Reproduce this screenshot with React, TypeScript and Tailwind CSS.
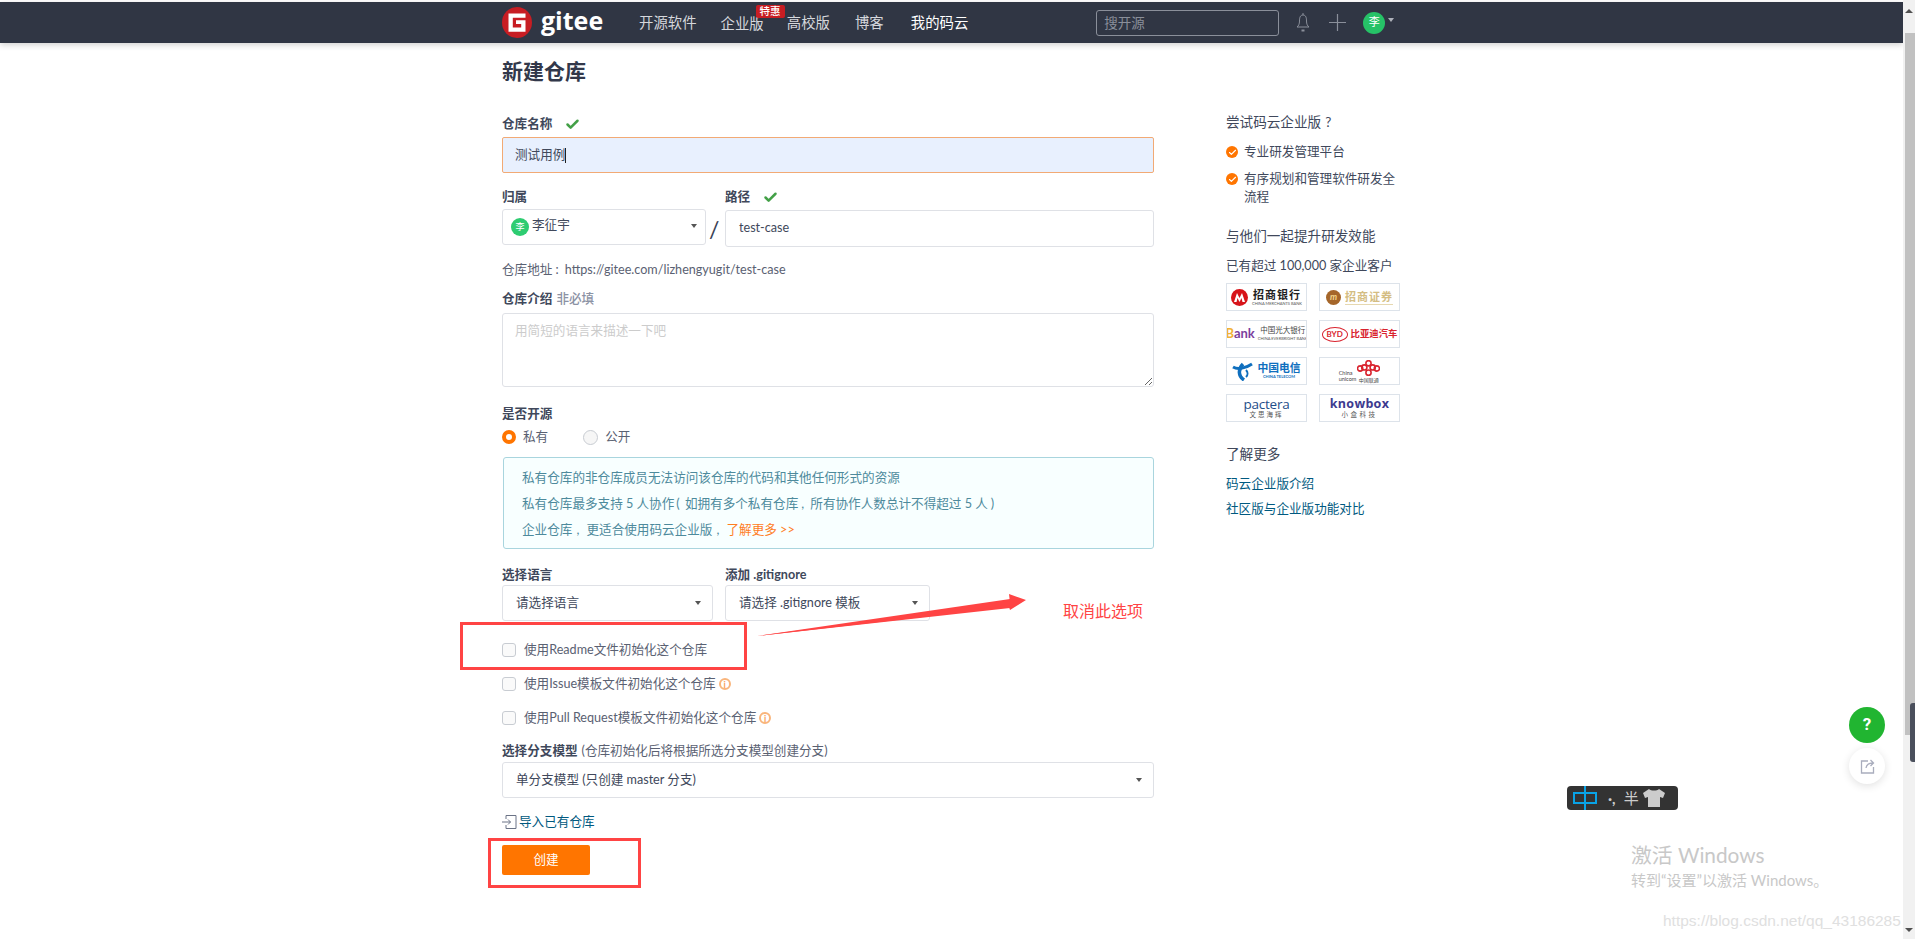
import React from "react";
import { Check } from "lucide-react";

const font = "font-['Lato','Noto_Sans_CJK_SC',sans-serif]";

const Caret: React.FC<{ className?: string }> = ({ className = "" }) => (
  <span className={`w-0 h-0 border-x-[3.5px] border-x-transparent border-t-[4px] border-t-[#555] ${className}`} />
);

const Label: React.FC<{ children: React.ReactNode; className?: string }> = ({ children, className = "" }) => (
  <div className={`h-[18px] leading-[18px] text-[12.6px] font-bold text-[#40485b] whitespace-nowrap flex items-center ${className}`}>
    {children}
  </div>
);

const OkMark: React.FC = () => <Check size={15} strokeWidth={4} className="ml-[13px] text-[#43a047]" />;

const SelectBox: React.FC<{ text: string; className?: string }> = ({ text, className = "" }) => (
  <div className={`h-9 border border-[#dfe1e6] rounded-[3px] bg-white flex items-center justify-between pl-[13px] pr-[11px] text-[12.6px] text-[#40485b] whitespace-nowrap ${className}`}>
    <span>{text}</span>
    <Caret />
  </div>
);

const InfoMark: React.FC = () => (
  <span className="ml-[3px] w-[12px] h-[12px] rounded-full border-2 border-[#f9b57c] text-[#f9a05a] text-[9px] font-bold leading-none flex items-center justify-center">
    i
  </span>
);

const CheckRow: React.FC<{ text: string; info?: boolean; className?: string }> = ({ text, info, className = "" }) => (
  <div className={`h-4 flex items-center text-[12.6px] text-[#5a6172] whitespace-nowrap ${className}`}>
    <span className="w-[14px] h-[14px] rounded-[3px] border border-[#c8ccd2] bg-[#fafafa] mr-[8px]" />
    {text}
    {info && <InfoMark />}
  </div>
);

const NavLink: React.FC<{ label: string; className?: string }> = ({ label, className = "" }) => (
  <a className={`text-[14.4px] text-[#d5d7dc] whitespace-nowrap ${className}`}>{label}</a>
);

const TopNav: React.FC = () => (
  <div className="mt-[2px] h-[41px] bg-[#303644] shadow-[0_2px_6px_rgba(0,0,0,0.18)] flex items-center pl-[502px] shrink-0">
    <svg width="30" height="31" viewBox="0 0 30 31">
      <ellipse cx="15" cy="15.5" rx="15" ry="15.5" fill="#c71d23" />
      <path d="M6.500 6.500h17v4.200H10.800v9.800h8.400v-3.400h-5.200v-3.800h9.500v11.400h-17z" fill="#fff" />
    </svg>
    <span className="ml-[9px] w-[60px] text-[25px] font-bold text-white leading-none font-['Open_Sans'] -mt-[4px]">gitee</span>
    <NavLink label="开源软件" className="ml-[38px]" />
    <div className="relative ml-[24px]">
      <NavLink label="企业版" />
      <span className="absolute left-[35px] -top-[6px] w-[29px] h-[13px] bg-[#c71d23] rounded-[2px] text-white text-[10.5px] leading-[13px] text-center font-medium">特惠</span>
    </div>
    <NavLink label="高校版" className="ml-[23px]" />
    <NavLink label="博客" className="ml-[25px]" />
    <NavLink label="我的码云" className="ml-[27px] text-white" />
    <input
      readOnly
      placeholder="搜开源"
      className="ml-[128px] w-[183px] h-[26px] border border-[#8a8f9a] rounded-[3px] bg-transparent px-[7px] text-[13.5px] outline-none placeholder:text-[#8a8f9a]"
    />
    <svg width="16" height="22" viewBox="0 0 16 22" className="ml-[16px]" fill="none" stroke="#8a8f9a" strokeWidth="1">
      <path d="M8 1v2M8 3c-3 0-3.500 3-3.500 6 0 3-1 5-2.500 6h12c-1.500-1-2.500-3-2.500-6 0-3-.5-6-3.500-6z" />
      <path d="M6.500 18.500h3" strokeWidth="2" />
    </svg>
    <svg width="17" height="17" viewBox="0 0 17 17" className="ml-[18px]" stroke="#8a8f9a" strokeWidth="1.2">
      <path d="M8.500 0v17M0 8.500h17" />
    </svg>
    <span className="ml-[17px] w-[22px] h-[22px] rounded-full bg-[#26c267] text-white text-[11px] flex items-center justify-center">李</span>
    <Caret className="ml-[3px] border-t-[#aeb2bb] -mt-[6px]" />
  </div>
);

const MainForm: React.FC = () => (
  <div className="w-[652px] shrink-0">
    <h1 className="mt-[14px] h-7 leading-7 text-[21px] font-bold text-[#32384a]">新建仓库</h1>

    <Label className="mt-[30px]">
      仓库名称
      <OkMark />
    </Label>
    <div className="mt-1 h-9 border border-[#f2aa75] rounded-[2px] bg-[#e8f0fe] flex items-center pl-[12px] text-[12.6px] text-[#40485b]">
      测试用例
      <span className="w-px h-[15px] bg-[#222]" />
    </div>

    <div className="mt-[15px] flex">
      <div className="w-[204px] shrink-0">
        <Label>归属</Label>
        <div className="mt-[3px] h-9 border border-[#dfe1e6] rounded-[3px] flex items-center pl-2 pr-[8px] text-[12.6px] text-[#40485b]">
          <span className="w-[18px] h-[18px] rounded-full bg-[#2ecc71] text-white text-[9px] flex items-center justify-center">李</span>
          <span className="ml-[3px] -mt-[3px] flex-1">李征宇</span>
          <Caret className="-mt-[2px]" />
        </div>
      </div>
      <div className="w-[19px] shrink-0 text-[23px] leading-none text-[#3a4256] pt-[30px] pl-[3px]">/</div>
      <div className="flex-1">
        <Label>
          路径
          <OkMark />
        </Label>
        <div className="mt-1 h-[37px] border border-[#dfe1e6] rounded-[3px] flex items-center pl-[13px] text-[12.6px] text-[#40485b]">test-case</div>
      </div>
    </div>

    <div className="mt-[14px] h-[18px] leading-[18px] text-[12.6px] text-[#5a6172]">
      仓库地址<span className="mx-[3px]">:</span> https://gitee.com/lizhengyugit/test-case
    </div>

    <Label className="mt-[11px]">
      仓库介绍<span className="ml-1 font-medium text-[#8c92a4]">非必填</span>
    </Label>
    <textarea
      readOnly
      placeholder="用简短的语言来描述一下吧"
      className="mt-[5px] block w-full h-[74px] border border-[#dfe1e6] rounded-[3px] px-3 py-[8px] text-[12.6px] leading-[18px] outline-none placeholder:text-[#ccc]"
    />

    <Label className="mt-[18px]">是否开源</Label>
    <div className="mt-[6px] h-4 flex items-center text-[12.6px] text-[#5a6172]">
      <span className="w-[14px] h-[14px] rounded-full border-[4px] border-[#ff7500] bg-white" />
      <span className="ml-[7px]">私有</span>
      <span className="ml-[35px] w-[15px] h-[15px] rounded-full border border-[#c8ccd2] bg-[#f6f6f6]" />
      <span className="ml-[7px]">公开</span>
    </div>

    <div className="mt-3 ml-px h-[92px] border border-[#a9d5de] rounded-[3px] bg-[#f8ffff] pl-[18px] pt-[11px] text-[12.6px] text-[#4d8a9c] leading-[18px]">
      <p>私有仓库的非仓库成员无法访问该仓库的代码和其他任何形式的资源</p>
      <p className="mt-[8px]">
        私有仓库最多支持 5 人协作<span className="mx-[2px]">(</span> 如拥有多个私有仓库<span className="mx-[3px]">,</span> 所有协作人数总计不得超过 5 人<span className="ml-[3px]">)</span>
      </p>
      <p className="mt-[8px]">
        企业仓库<span className="mx-[4px]">,</span> 更适合使用码云企业版<span className="mx-[4px]">,</span> <a className="text-[#ff7d1f]">了解更多 &gt;&gt;</a>
      </p>
    </div>

    <div className="mt-[17px] flex">
      <div className="w-[211px] shrink-0">
        <Label>选择语言</Label>
        <SelectBox text="请选择语言" className="mt-px" />
      </div>
      <div className="ml-3 w-[205px] shrink-0">
        <Label>添加 .gitignore</Label>
        <SelectBox text="请选择 .gitignore 模板" className="mt-px" />
      </div>
    </div>

    <CheckRow text="使用Readme文件初始化这个仓库" className="mt-[21px]" />
    <CheckRow text="使用Issue模板文件初始化这个仓库" info className="mt-[18px]" />
    <CheckRow text="使用Pull Request模板文件初始化这个仓库" info className="mt-[18px]" />

    <Label className="mt-[16px]">
      选择分支模型<span className="ml-1 font-normal text-[#5a6172]">(仓库初始化后将根据所选分支模型创建分支)</span>
    </Label>
    <SelectBox text="单分支模型 (只创建 master 分支)" className="mt-[2px]" />

    <div className="mt-[15px] h-[18px] flex items-center text-[12.6px] text-[#005980]">
      <svg width="15" height="16" viewBox="0 0 15 16" fill="none" stroke="#6b7386" strokeWidth="1" className="mr-[2px]">
        <path d="M4 5V1.500h10v13H4V11M0 8h8.500M6 5.500 8.500 8 6 10.500" />
      </svg>
      导入已有仓库
    </div>

    <button className="mt-[14px] block w-[88px] h-[30px] rounded-[2px] bg-[#ff7500] text-white text-[12.6px]">创建</button>
  </div>
);

const BulletCheck: React.FC = () => (
  <span className="mt-[3px] w-3 h-3 rounded-full bg-[#ff7500] flex items-center justify-center shrink-0">
    <Check size={9} strokeWidth={3} className="text-white" />
  </span>
);

const LogoBox: React.FC<{ children: React.ReactNode }> = ({ children }) => (
  <div className="h-7 border border-[#dde3ea] flex items-center justify-center overflow-hidden whitespace-nowrap">{children}</div>
);

const TwoLines: React.FC<{ top: string; sub: string; topClass: string; subClass?: string }> = ({ top, sub, topClass, subClass = "text-[#555]" }) => (
  <div className="flex flex-col items-center leading-none">
    <span className={topClass}>{top}</span>
    <span className={`mt-[2px] text-[4px] ${subClass}`}>{sub}</span>
  </div>
);

const CustomerLogos: React.FC = () => (
  <div className="mt-2 grid grid-cols-[81px_81px] grid-rows-[28px_28px_28px_28px] gap-x-3 gap-y-[9px]">
    <LogoBox>
      <svg width="17" height="17" viewBox="0 0 17 17" className="mr-[4px]">
        <circle cx="8.500" cy="8.500" r="8.500" fill="#d7141a" />
        <path d="M3 13 6 4l2.500 5L11 4l3 9h-2.500L10.500 9l-2 4-2-4-1 4z" fill="#fff" />
      </svg>
      <TwoLines top="招商银行" sub="CHINA MERCHANTS BANK" topClass="text-[11px] font-bold text-[#222] tracking-[1px]" />
    </LogoBox>
    <LogoBox>
      <span className="mr-[4px] w-[15px] h-[15px] rounded-full bg-[#a5662a] text-[#f3d58c] text-[9px] italic font-bold flex items-center justify-center">m</span>
      <span className="text-[11px] leading-[14px] font-bold text-[#d4bd83] tracking-[1px] border-b border-[#e6d8b0]">招商证券</span>
    </LogoBox>
    <LogoBox>
      <span className="text-[13px] font-bold text-[#7b3f9d] mr-[3px]">
        <span className="text-[#f2b233]">B</span>ank
      </span>
      <TwoLines top="中国光大银行" sub="CHINA EVERBRIGHT BANK" topClass="text-[7.500px] text-[#444]" />
    </LogoBox>
    <LogoBox>
      <span className="mr-[3px] w-[26px] h-[15px] rounded-[50%] border-[1.5px] border-[#d9232e] text-[#d9232e] text-[8px] font-bold flex items-center justify-center">BYD</span>
      <span className="text-[9.400px] font-bold text-[#d9232e]">比亚迪汽车</span>
    </LogoBox>
    <LogoBox>
      <svg width="21" height="20" viewBox="0 0 21 20" fill="none" stroke="#0f6fbe" className="mr-[4px]">
        <path d="M1 6c5 3 13 1 19-3" strokeWidth="3" />
        <path d="M11 3C6 8 6 15 12 19" strokeWidth="3.500" />
        <path d="M14 9c2 2 2 5 0 7" strokeWidth="2" />
      </svg>
      <TwoLines top="中国电信" sub="CHINA TELECOM" topClass="text-[10.800px] font-bold text-[#0f6fbe]" subClass="text-[#0f6fbe] font-bold" />
    </LogoBox>
    <LogoBox>
      <div className="flex flex-col text-[5.500px] leading-[6px] text-[#444] mr-[1px] mt-[9px]">
        <span>China</span>
        <span>unicom</span>
      </div>
      <div className="flex flex-col items-center">
        <svg width="23" height="17" viewBox="0 0 22 16" fill="none" stroke="#d9232e" strokeWidth="1.500">
          <circle cx="11" cy="3" r="2.500" />
          <circle cx="7" cy="7" r="2.500" />
          <circle cx="15" cy="7" r="2.500" />
          <circle cx="3" cy="8" r="2.500" />
          <circle cx="19" cy="8" r="2.500" />
          <circle cx="11" cy="12" r="2.500" />
        </svg>
        <span className="text-[5px] leading-[6px] text-[#444]">中国联通</span>
      </div>
    </LogoBox>
    <LogoBox>
      <div className="flex flex-col items-center leading-none">
        <span className="text-[13.500px] text-[#1f4e89] font-['Open_Sans'] tracking-[-0.2px]">pactera</span>
        <span className="mt-[1px] text-[6.500px] text-[#555] tracking-[2px]">文思海辉</span>
      </div>
    </LogoBox>
    <LogoBox>
      <div className="flex flex-col items-center leading-none">
        <span className="text-[12.500px] font-bold text-[#3c3a8f] font-['Open_Sans'] tracking-[0.3px]">knowbox</span>
        <span className="mt-[1px] text-[6.500px] text-[#555] tracking-[2.500px]">小盒科技</span>
      </div>
    </LogoBox>
  </div>
);

const SidePanel: React.FC = () => (
  <div className="ml-[72px] w-[176px] shrink-0 text-[#40485b]">
    <div className="mt-[70px] h-[18px] leading-[18px] text-[13.6px]">
      尝试码云企业版<span className="ml-[4px]">?</span>
    </div>
    <div className="mt-3 flex gap-[6px] text-[12.6px] leading-[18px]">
      <BulletCheck />
      <span>专业研发管理平台</span>
    </div>
    <div className="mt-[9px] flex gap-[6px] text-[12.6px] leading-[18px]">
      <BulletCheck />
      <span className="w-[154px]">有序规划和管理软件研发全流程</span>
    </div>
    <div className="mt-[21px] h-[18px] leading-[18px] text-[13.6px] whitespace-nowrap">与他们一起提升研发效能</div>
    <div className="mt-3 h-[18px] leading-[18px] text-[12.6px] whitespace-nowrap">已有超过 100,000 家企业客户</div>
    <CustomerLogos />
    <div className="mt-[23px] h-[18px] leading-[18px] text-[13.6px]">了解更多</div>
    <div className="mt-3 h-[18px] leading-[18px] text-[12.6px] text-[#005980]">码云企业版介绍</div>
    <div className="mt-[7px] h-[18px] leading-[18px] text-[12.6px] text-[#005980]">社区版与企业版功能对比</div>
  </div>
);

const ScrollBar: React.FC = () => (
  <div className="w-3 shrink-0 bg-[#f1f1f1] flex flex-col items-center relative">
    <span className="mt-[9px] w-0 h-0 border-x-[4px] border-x-transparent border-b-[4px] border-b-[#505050]" />
    <div className="mt-[20px] ml-[2px] w-[10px] h-[702px] bg-[#c1c1c1]" />
    <span className="mt-[193px] w-0 h-0 border-x-[4px] border-x-transparent border-t-[4px] border-t-[#505050]" />
    <div className="absolute left-[7px] top-[703px] w-[5px] h-[59px] rounded-l-[3px] bg-[#4a4f5c]" />
  </div>
);

// 截图上叠加的标注和系统浮层
const Overlays: React.FC = () => (
  <>
    <div className="absolute left-[460px] top-[622px] w-[287px] h-[48px] border-[3px] border-[#f44]" />
    <div className="absolute left-[488px] top-[838px] w-[153px] h-[50px] border-[3px] border-[#f44]" />
    <svg className="absolute left-[750px] top-[590px]" width="280" height="50" viewBox="0 0 280 50">
      <path d="M7 46 260 13 259 4 276 10 260 20 259 17z" fill="#f44" />
      <path d="M7 46 260 9v9z" fill="#f44" />
    </svg>
    <div className="absolute left-[1063px] top-[600px] text-[16px] leading-[22px] text-[#f44]">取消此选项</div>

    <div className="absolute left-[1849px] top-[707px] w-9 h-9 rounded-full bg-[#21b531] text-white text-[17px] font-bold flex items-center justify-center font-['Roboto']">?</div>
    <div className="absolute left-[1849px] top-[748px] w-9 h-9 rounded-full bg-white shadow-[0_2px_8px_rgba(0,0,0,0.12)] flex items-center justify-center">
      <svg width="15" height="15" viewBox="0 0 15 15" fill="none" stroke="#a9adbd" strokeWidth="1.300">
        <path d="M8 2H1.500v12h12V8M6 9c.5-3.500 3-5 7-5M10.500 1 13.500 4 10.500 7" />
      </svg>
    </div>

    <div className="absolute left-[1567px] top-[786px] w-[111px] h-6 rounded-[4px] bg-[#333] flex items-center text-[#ccc]">
      <svg width="26" height="24" viewBox="0 0 26 24" fill="none" stroke="#09a3e6" strokeWidth="2" className="ml-[6px]">
        <path d="M1 7h22v10H1zM12 0v24" />
      </svg>
      <span className="ml-[9px] text-[15px] leading-none font-bold">·,</span>
      <span className="ml-[8px] text-[15px] leading-none">半</span>
      <svg width="22" height="18" viewBox="0 0 22 18" fill="#ccc" className="ml-[4px]">
        <path d="M6 0c2 2 8 2 10 0l6 4-2 5-3-1v10H5V8L2 9 0 4z" />
      </svg>
    </div>

    <div className="absolute left-[1631px] top-[842px] text-[20.800px] leading-[26px] text-[#c8c8c8] whitespace-nowrap">激活 Windows</div>
    <div className="absolute left-[1631px] top-[870px] text-[15px] leading-[20px] text-[#c8c8c8] whitespace-nowrap">转到“设置”以激活 Windows。</div>
    <div className="absolute left-[1663px] top-[912px] text-[15.500px] leading-[18px] text-[#e0e0e0] whitespace-nowrap font-['Liberation_Sans']">https://blog.csdn.net/qq_43186285</div>
  </>
);

const App: React.FC = () => {
  return (
    <div className={`relative w-full h-[939px] overflow-hidden bg-white flex ${font}`}>
      <div className="flex-1 min-w-0 flex flex-col">
        <TopNav />
        <div className="flex pl-[502px]">
          <MainForm />
          <SidePanel />
        </div>
      </div>
      <ScrollBar />
      <Overlays />
    </div>
  );
};

export default App;
